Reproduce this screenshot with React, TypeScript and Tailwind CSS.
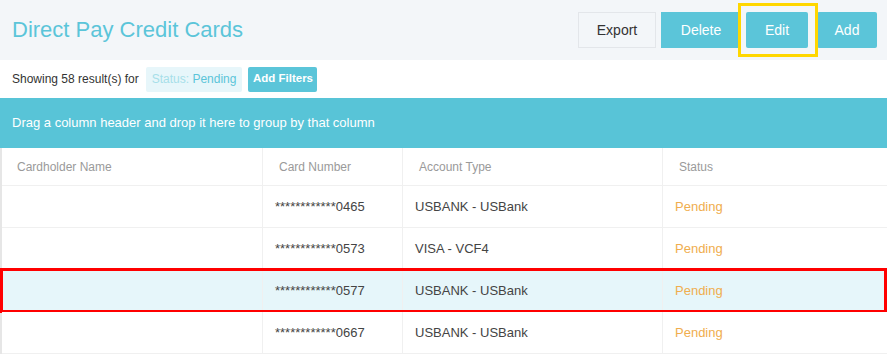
import React from "react";

const rows = [
  { card: "************0465", account: "USBANK - USBank", status: "Pending" },
  { card: "************0573", account: "VISA - VCF4", status: "Pending" },
  { card: "************0577", account: "USBANK - USBank", status: "Pending", selected: true },
  { card: "************0667", account: "USBANK - USBank", status: "Pending" },
];

const cols = "grid grid-cols-[260px_140px_260px_1fr]";

export default function App() {
  return (
    <div className="w-[887px] h-[357px] overflow-hidden bg-white font-['Liberation_Sans',Arial,sans-serif]">
      {/* page header */}
      <div className="h-[60px] bg-[#f3f6f9] flex items-center pl-3 pr-[10px]">
        <h1 className="text-[22px] text-[#5bc5d9] leading-none">Direct Pay Credit Cards</h1>
        <div className="ml-auto flex items-center">
          <button className="w-[78px] h-[36px] bg-[#f3f6f9] border border-[#e3e6ea] text-[14px] text-[#333]">
            Export
          </button>
          <button className="ml-[5px] w-[80px] h-[36px] bg-[#5bc5d9] text-white text-[14px]">Delete</button>
          <div className="relative ml-[5px]">
            <button className="w-[62px] h-[36px] rounded-[2px] bg-[#5bc5d9] text-white text-[14px]">Edit</button>
            <div className="absolute left-[-8px] top-[-9px] w-[80px] h-[54px] border-[3px] border-[#ffd700] pointer-events-none" />
          </div>
          <button className="ml-[9px] w-[60px] h-[36px] rounded-[2px] bg-[#5bc5d9] text-white text-[14px]">Add</button>
        </div>
      </div>

      {/* filter row */}
      <div className="h-[38px] flex items-center pl-3 gap-[6px]">
        <span className="text-[12px] text-[#333] mr-[1px]">Showing 58 result(s) for</span>
        <span className="h-[25px] px-[6px] flex items-center rounded-[2px] bg-[#e7f6fa] text-[12px]">
          <span className="text-[#a6dfe9]">Status:&nbsp;</span>
          <span className="text-[#5bc5d9]">Pending</span>
        </span>
        <button className="h-[25px] w-[69px] rounded-[2px] bg-[#5bc5d9] text-white text-[11.5px] font-bold">
          Add Filters
        </button>
      </div>

      {/* group panel */}
      <div className="h-[50px] bg-[#58c4d7] flex items-center pl-3 text-[13px] text-white">
        Drag a column header and drop it here to group by that column
      </div>

      {/* grid */}
      <div className="border-l-2 border-[#e6e6e6]">
        <div className={`${cols} h-[38px] border-b border-[#f0f0f0] text-[12px] text-[#9a9a9a]`}>
          <div className="flex items-center pl-[15px]">Cardholder Name</div>
          <div className="flex items-center pl-4 border-l border-[#f0f0f0]">Card Number</div>
          <div className="flex items-center pl-4 border-l border-[#f0f0f0]">Account Type</div>
          <div className="flex items-center pl-4 border-l border-[#f0f0f0]">Status</div>
        </div>
        {rows.map((r) => (
          <div
            key={r.card}
            className={`relative ${cols} h-[42px] border-b border-[#f0f0f0] text-[13px] text-[#444] ${
              r.selected ? "bg-[#e6f6fa]" : "bg-white"
            }`}
          >
            <div />
            <div className="flex items-center pl-3 border-l border-[#f0f0f0]">{r.card}</div>
            <div className="flex items-center pl-3 border-l border-[#f0f0f0]">{r.account}</div>
            <div className="flex items-center pl-3 border-l border-[#f0f0f0] text-[#f0ad4e]">{r.status}</div>
            {r.selected && (
              <div className="absolute left-[-2px] right-0 top-[-2px] bottom-[-2px] border-[3px] border-[#ff0000] pointer-events-none" />
            )}
          </div>
        ))}
      </div>
    </div>
  );
}
